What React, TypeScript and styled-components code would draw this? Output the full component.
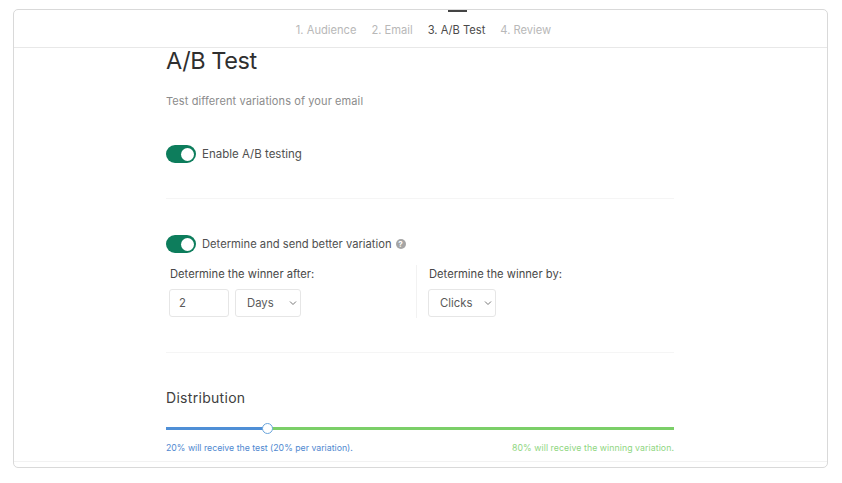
import React from "react";
import styled, { createGlobalStyle } from "styled-components";

const Global = createGlobalStyle`
  html, body { margin: 0; padding: 0; background: #fff; }
  body { font-family: Inter, "Noto Sans", sans-serif; color: #333; }
`;

const Page = styled.div`
  width: 842px;
  height: 483px;
  padding: 9px 14px 15px 13px;
  box-sizing: border-box;
`;

const Card = styled.div`
  height: 100%;
  border: 1px solid #d9d9d9;
  border-radius: 5px;
  box-sizing: border-box;
  display: flex;
  flex-direction: column;
  overflow: hidden;
`;

const Steps = styled.div`
  height: 38px;
  flex: none;
  display: flex;
  justify-content: center;
  gap: 15px;
  padding-left: 6px;
  border-bottom: 1px solid #e8e8e8;
  box-sizing: border-box;
`;

const Step = styled.div<{ $active?: boolean }>`
  position: relative;
  font-size: 11.15px;
  line-height: 41px;
  color: ${(p) => (p.$active ? "#4a4a4a" : "#b8b8b8")};
  &::before {
    content: "";
    display: ${(p) => (p.$active ? "block" : "none")};
    position: absolute;
    top: 0;
    left: 20px;
    width: 19px;
    height: 2px;
    background: #444;
  }
`;

const Body = styled.div`
  flex: 1;
  width: 508px;
  margin-left: 152px;
  display: flex;
  flex-direction: column;
`;

const Title = styled.h1`
  margin: 0;
  height: 28px;
  font-size: 23.5px;
  line-height: 26px;
  font-weight: 400;
  color: #2f2f2f;
  letter-spacing: -0.45px;
`;

const Subtitle = styled.p`
  margin: 17px 0 0;
  font-size: 11px;
  line-height: 16px;
  color: #8c8c8c;
  letter-spacing: 0.1px;
`;

const ToggleRow = styled.div<{ $top: number; $size: number }>`
  margin-top: ${(p) => p.$top}px;
  display: flex;
  align-items: center;
  gap: 6px;
  height: 18px;
  font-size: ${(p) => p.$size}px;
  color: #505050;
`;

const Toggle = styled.span`
  width: 30px;
  height: 18px;
  border-radius: 9px;
  background: #0d7d5c;
  display: flex;
  align-items: center;
  justify-content: flex-end;
  padding-right: 2px;
  box-sizing: border-box;
`;

const Knob = styled.span`
  width: 13px;
  height: 13px;
  border-radius: 50%;
  background: #fff;
`;

const Divider = styled.div<{ $top: number }>`
  margin-top: ${(p) => p.$top}px;
  height: 1px;
  flex: none;
  background: #f5f5f5;
`;

const Help = styled.span`
  width: 10px;
  height: 10px;
  border-radius: 50%;
  background: #a5a5a5;
  color: #fff;
  font-size: 8px;
  font-weight: 700;
  line-height: 10px;
  text-align: center;
  margin-left: -2px;
`;

const Columns = styled.div`
  display: flex;
  margin-top: 12px;
  height: 53px;
`;

const Column = styled.div<{ $divided?: boolean }>`
  width: ${(p) => (p.$divided ? "258px" : "250px")};
  padding-left: ${(p) => (p.$divided ? "11px" : "3px")};
  box-sizing: border-box;
  border-left: ${(p) => (p.$divided ? "1px solid #f2f2f2" : "0")};
`;

const Label = styled.div`
  font-size: 11.2px;
  line-height: 18px;
  color: #484848;
  padding-left: 1px;
`;

const Controls = styled.div`
  display: flex;
  gap: 6px;
  margin-top: 6px;
`;

const Field = styled.div<{ $w: number; $pad: number }>`
  width: ${(p) => p.$w}px;
  height: 28px;
  border: 1px solid #e6e6e6;
  border-radius: 3px;
  box-sizing: border-box;
  padding: 0 3px 0 ${(p) => p.$pad}px;
  display: flex;
  align-items: center;
  justify-content: space-between;
  font-size: 11.3px;
  color: #5a5a5a;
`;

const Heading = styled.h2`
  margin: 35px 0 0;
  font-size: 14px;
  line-height: 20px;
  font-weight: 400;
  color: #404040;
  letter-spacing: 0.3px;
`;

const Slider = styled.div`
  position: relative;
  margin-top: 19px;
  height: 3px;
  display: flex;
`;

const Track = styled.div<{ $color: string; $w: string }>`
  width: ${(p) => p.$w};
  background: ${(p) => p.$color};
`;

const Thumb = styled.span`
  position: absolute;
  left: 96px;
  top: -4px;
  width: 11px;
  height: 11px;
  border: 1px solid #6aa5dc;
  border-radius: 50%;
  background: #fff;
  box-sizing: border-box;
`;

const Captions = styled.div`
  margin-top: 12px;
  display: flex;
  justify-content: space-between;
  font-size: 8.75px;
  line-height: 12px;
`;

const Caption = styled.span<{ $color: string; $spacing?: number }>`
  color: ${(p) => p.$color};
  letter-spacing: ${(p) => p.$spacing ?? 0}px;
`;

const BottomLine = styled.div`
  height: 1px;
  flex: none;
  background: #f2f2f2;
  margin-bottom: 5px;
`;

const Select = ({ w, value }: { w: number; value: string }) => (
  <Field $w={w} $pad={11}>
    {value}
    <svg width="8" height="8" viewBox="0 0 8 8" fill="none" stroke="#777" strokeWidth="1">
      <path d="M1 2.5 L4 5.5 L7 2.5" />
    </svg>
  </Field>
);

export default function App() {
  return (
    <Page>
      <Global />
      <Card>
        <Steps>
          <Step>1. Audience</Step>
          <Step>2. Email</Step>
          <Step $active>3. A/B Test</Step>
          <Step>4. Review</Step>
        </Steps>
        <Body>
          <Title>A/B Test</Title>
          <Subtitle>Test different variations of your email</Subtitle>
          <ToggleRow $top={36} $size={11.5}>
            <Toggle><Knob /></Toggle>
            Enable A/B testing
          </ToggleRow>
          <Divider $top={35} />
          <ToggleRow $top={36} $size={11.2}>
            <Toggle><Knob /></Toggle>
            Determine and send better variation
            <Help>?</Help>
          </ToggleRow>
          <Columns>
            <Column>
              <Label>Determine the winner after:</Label>
              <Controls>
                <Field $w={60} $pad={9}>2</Field>
                <Select w={66} value="Days" />
              </Controls>
            </Column>
            <Column $divided>
              <Label>Determine the winner by:</Label>
              <Controls>
                <Select w={68} value="Clicks" />
              </Controls>
            </Column>
          </Columns>
          <Divider $top={34} />
          <Heading>Distribution</Heading>
          <Slider>
            <Track $color="#4f8fd6" $w="20%" />
            <Track $color="#7bcf68" $w="80%" />
            <Thumb />
          </Slider>
          <Captions>
            <Caption $color="#4f88d0">20% will receive the test (20% per variation).</Caption>
            <Caption $color="#8fd67f" $spacing={0.07}>80% will receive the winning variation.</Caption>
          </Captions>
        </Body>
        <BottomLine />
      </Card>
    </Page>
  );
}
